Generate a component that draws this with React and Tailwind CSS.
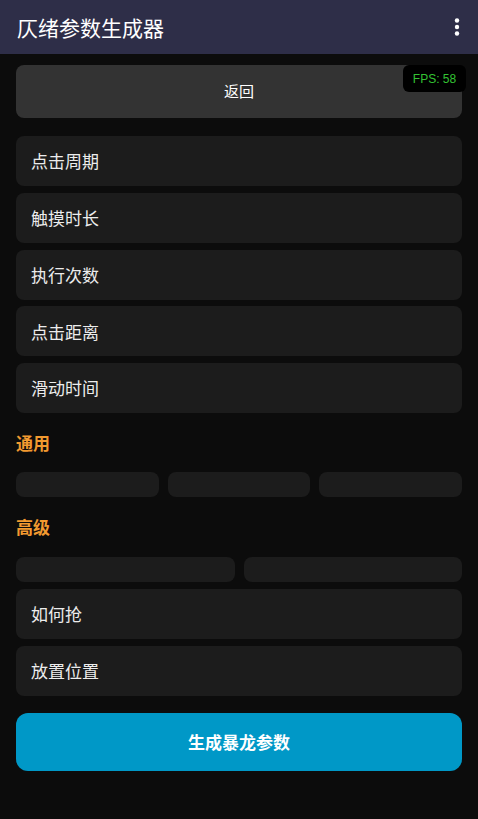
import React from 'react';

const font = { fontFamily: '"Noto Sans CJK SC", "Noto Sans", sans-serif' };

const rows1 = ['点击周期', '触摸时长', '执行次数', '点击距离', '滑动时间'];
const rows2 = ['如何抢', '放置位置'];

function Row({ label }) {
  return (
    <div className="h-[50px] rounded-lg bg-[#1c1c1c] flex items-center pl-[15px] text-[17px] text-[#ececec]">
      {label}
    </div>
  );
}

export default function App() {
  return (
    <div className="w-[478px] h-[819px] bg-[#0c0c0c] flex flex-col" style={font}>
      <div className="h-[54px] bg-[#2e2e48] flex items-center justify-between pl-[17px] pr-[18px] shrink-0">
        <span className="text-[21px] text-white leading-none">仄绪参数生成器</span>
        <svg width="6" height="18" viewBox="0 0 6 18" fill="#ffffff">
          <circle cx="3" cy="2.5" r="2.2" />
          <circle cx="3" cy="9" r="2.2" />
          <circle cx="3" cy="15.5" r="2.2" />
        </svg>
      </div>

      <div className="flex flex-col px-4 pt-[11px]">
        <div className="relative">
          <button className="w-full h-[53px] rounded-lg bg-[#333333] text-[15px] text-white flex items-center justify-center">
            返回
          </button>
          <div className="absolute right-[-4px] top-0 h-[27px] w-[63px] rounded-md bg-black flex items-center justify-center text-[12px] text-[#33c233]" style={{ fontFamily: '"Liberation Sans", sans-serif' }}>
            FPS: 58
          </div>
        </div>

        <div className="flex flex-col gap-[6.75px] mt-[18px]">
          {rows1.map((r) => (
            <Row key={r} label={r} />
          ))}
        </div>

        <div className="mt-[20px] h-[20px] flex items-center text-[17px] font-bold text-[#f29a30]">通用</div>
        <div className="grid grid-cols-3 gap-[9px] mt-[19px]">
          <div className="h-[25px] rounded-lg bg-[#1c1c1c]" />
          <div className="h-[25px] rounded-lg bg-[#1c1c1c]" />
          <div className="h-[25px] rounded-lg bg-[#1c1c1c]" />
        </div>

        <div className="mt-[20px] h-[20px] flex items-center text-[17px] font-bold text-[#f29a30]">高级</div>
        <div className="grid grid-cols-2 gap-[9px] mt-[20px]">
          <div className="h-[25px] rounded-lg bg-[#1c1c1c]" />
          <div className="h-[25px] rounded-lg bg-[#1c1c1c]" />
        </div>

        <div className="flex flex-col gap-[7px] mt-[7px]">
          {rows2.map((r) => (
            <Row key={r} label={r} />
          ))}
        </div>

        <button className="mt-[17px] h-[58px] rounded-xl bg-[#0098c7] text-white text-[17px] font-bold flex items-center justify-center">
          生成暴龙参数
        </button>
      </div>
    </div>
  );
}
